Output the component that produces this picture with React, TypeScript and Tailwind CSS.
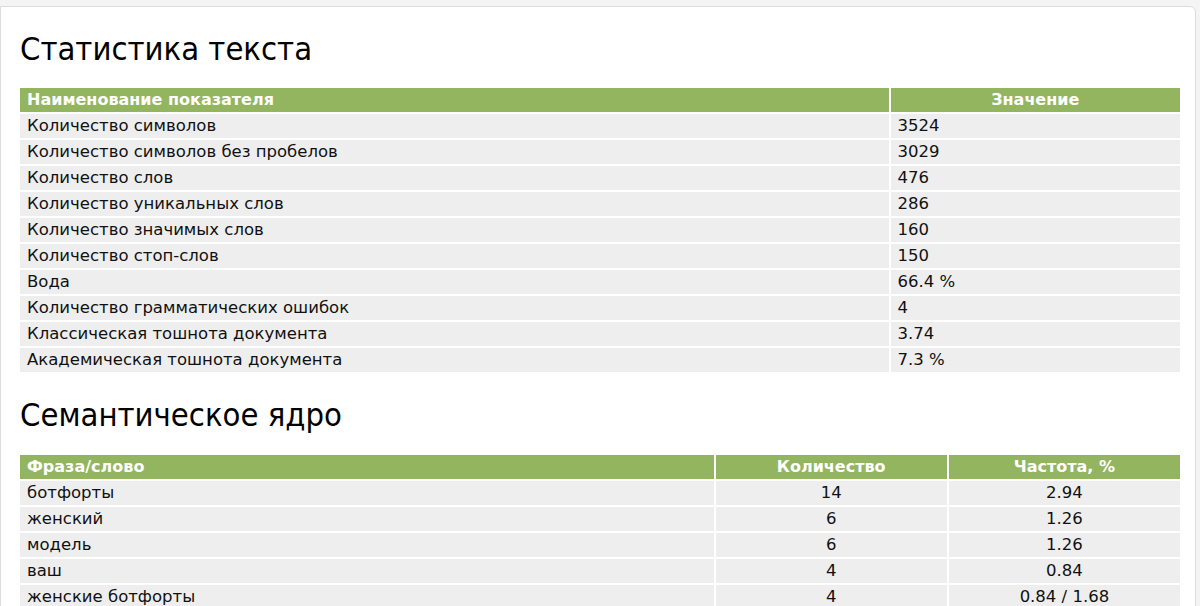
import React from "react";

const stats: [string, string][] = [
  ["Количество символов", "3524"],
  ["Количество символов без пробелов", "3029"],
  ["Количество слов", "476"],
  ["Количество уникальных слов", "286"],
  ["Количество значимых слов", "160"],
  ["Количество стоп-слов", "150"],
  ["Вода", "66.4 %"],
  ["Количество грамматических ошибок", "4"],
  ["Классическая тошнота документа", "3.74"],
  ["Академическая тошнота документа", "7.3 %"],
];

const core: [string, string, string][] = [
  ["ботфорты", "14", "2.94"],
  ["женский", "6", "1.26"],
  ["модель", "6", "1.26"],
  ["ваш", "4", "0.84"],
  ["женские ботфорты", "4", "0.84 / 1.68"],
];

const titleFont = { fontFamily: '"DejaVu Sans Condensed", "DejaVu Sans", sans-serif' };

export default function App() {
  return (
    <div
      className="w-[1200px] h-[606px] overflow-hidden bg-[#f4f4f4] pt-[6px]"
      style={{ fontFamily: '"DejaVu Sans", sans-serif' }}
    >
      <div className="w-[1196px] h-[700px] bg-white border border-[#dcdcdc] rounded-tr-[6px] pl-[17px] pr-[13px]">
        <h1 style={titleFont} className="text-[32.5px] leading-[40px] text-black mt-[22px] ml-[2px] mb-[17px]">Статистика текста</h1>
        <table className="w-[1164px] border-separate border-spacing-[2px] text-[16.5px] leading-[20px] text-[#111]">
          <thead>
            <tr className="bg-[#93b55f] text-white">
              <th className="text-left font-bold text-[16px] px-[7px] h-[24px] w-[75%]">Наименование показателя</th>
              <th className="text-center font-bold text-[16px] px-[7px] h-[24px]">Значение</th>
            </tr>
          </thead>
          <tbody>
            {stats.map(([a, b]) => (
              <tr key={a} className="bg-[#eeeeee]">
                <td className="px-[7px] h-[24px]">{a}</td>
                <td className="px-[7px] h-[24px]">{b}</td>
              </tr>
            ))}
          </tbody>
        </table>
        <h1 style={titleFont} className="text-[32.5px] leading-[40px] text-black mt-[21px] ml-[2px] mb-[18px]">Семантическое ядро</h1>
        <table className="w-[1164px] border-separate border-spacing-[2px] text-[16.5px] leading-[20px] text-[#111]">
          <thead>
            <tr className="bg-[#93b55f] text-white">
              <th className="text-left font-bold text-[16px] px-[7px] h-[24px] w-[60%]">Фраза/слово</th>
              <th className="text-center font-bold text-[16px] px-[7px] h-[24px] w-[20%]">Количество</th>
              <th className="text-center font-bold text-[16px] px-[7px] h-[24px] w-[20%]">Частота, %</th>
            </tr>
          </thead>
          <tbody>
            {core.map(([a, b, c]) => (
              <tr key={a} className="bg-[#eeeeee]">
                <td className="px-[7px] h-[24px]">{a}</td>
                <td className="px-[7px] h-[24px] text-center">{b}</td>
                <td className="px-[7px] h-[24px] text-center">{c}</td>
              </tr>
            ))}
          </tbody>
        </table>
      </div>
    </div>
  );
}
